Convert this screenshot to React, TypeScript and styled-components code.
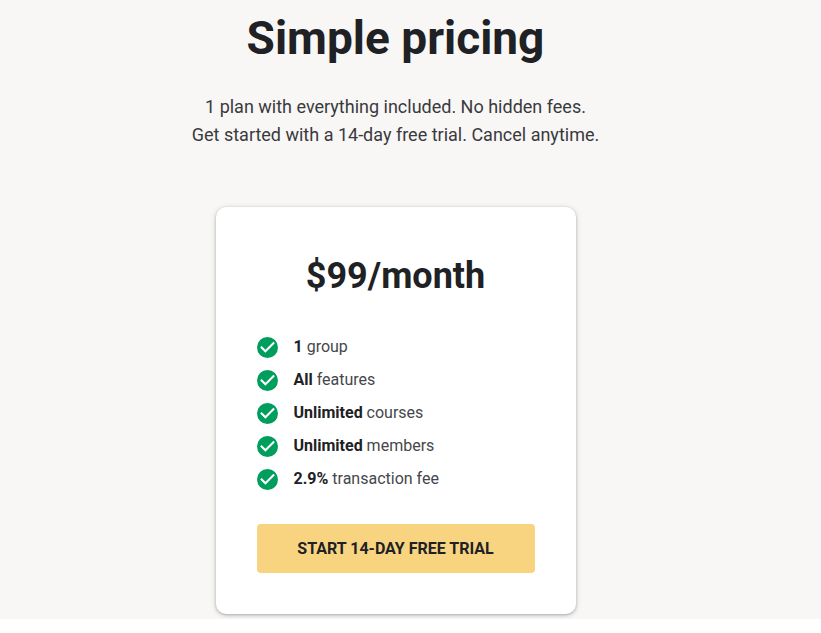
import React from "react";
import styled, { createGlobalStyle } from "styled-components";

const GlobalStyle = createGlobalStyle`
  * { box-sizing: border-box; }
  body { margin: 0; background: #fff; font-family: Roboto, sans-serif; color: #202124; }
`;

const Section = styled.main`
  display: flex;
  flex-direction: column;
  align-items: center;
  padding: 8px 30px 5px 0;
  background: #f8f7f5;
`;

const Title = styled.h1`
  margin: 0;
  font-size: 46px;
  line-height: 60px;
  font-weight: 700;
`;

const Intro = styled.p`
  margin: 25px 0 58px;
  font-size: 18px;
  line-height: 28px;
  text-align: center;
  color: #383a3e;
`;

const Card = styled.section`
  display: flex;
  flex-direction: column;
  width: 100%;
  max-width: 360px;
  padding: 41px;
  background: #fff;
  border-radius: 10px;
  box-shadow: 0 1px 3px rgba(60, 64, 67, 0.35), 0 1px 6px rgba(60, 64, 67, 0.15);
`;

const Price = styled.h2`
  margin: 0;
  font-size: 36px;
  line-height: 56px;
  font-weight: 700;
  text-align: center;
`;

const FeatureList = styled.ul`
  display: grid;
  gap: 9px;
  margin: 31px 0 33px;
  padding: 0;
  list-style: none;
`;

const Feature = styled.li`
  display: flex;
  align-items: center;
  gap: 16px;
  font-size: 16px;
  line-height: 24px;
  color: #45474b;
`;

const Amount = styled.strong`
  font-weight: 700;
  color: #202124;
`;

const CheckIcon = styled.svg`
  width: 21px;
  height: 21px;
  flex: none;
`;

const TrialButton = styled.button`
  height: 49px;
  border: 0;
  border-radius: 4px;
  background: #f8d481;
  color: #202124;
  font: 700 16px/24px Roboto, sans-serif;
  text-transform: uppercase;
  cursor: pointer;
`;

const features = [
  { amount: "1", label: "group" },
  { amount: "All", label: "features" },
  { amount: "Unlimited", label: "courses" },
  { amount: "Unlimited", label: "members" },
  { amount: "2.9%", label: "transaction fee" },
];

export default function App() {
  return (
    <>
      <GlobalStyle />
      <Section>
        <Title>Simple pricing</Title>
        <Intro>
          1 plan with everything included. No hidden fees.
          <br />
          Get started with a 14-day free trial. Cancel anytime.
        </Intro>
        <Card>
          <Price>$99/month</Price>
          <FeatureList>
            {features.map(({ amount, label }) => (
              <Feature key={label}>
                <CheckIcon viewBox="2 2 20 20" aria-hidden="true">
                  <circle cx="12" cy="12" r="10" fill="#009e5d" />
                  <path d="M10 17 5 12l1.41-1.41L10 14.17l7.59-7.59L19 8z" fill="#fff" />
                </CheckIcon>
                <span>
                  <Amount>{amount}</Amount> {label}
                </span>
              </Feature>
            ))}
          </FeatureList>
          <TrialButton type="button">Start 14-day free trial</TrialButton>
        </Card>
      </Section>
    </>
  );
}
